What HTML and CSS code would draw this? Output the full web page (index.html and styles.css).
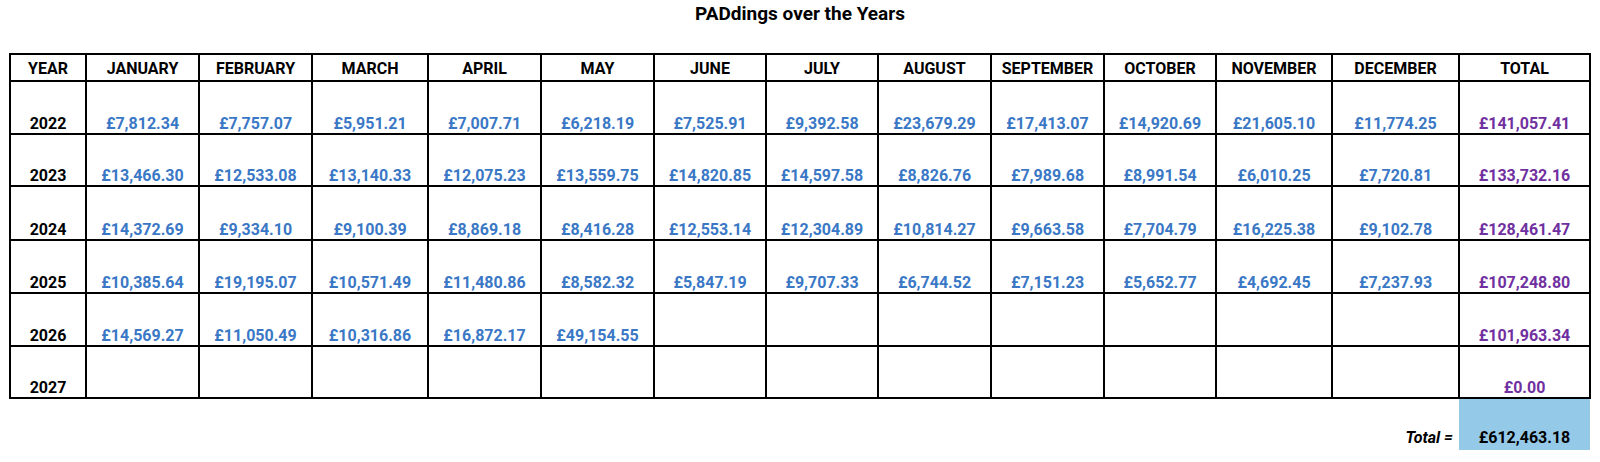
FILE: index.html
```html
<!DOCTYPE html>
<html lang="en">
<head>
<meta charset="utf-8">
<title>PADdings over the Years</title>
<link rel="stylesheet" href="styles.css">
</head>
<body>
<div class="page">
  <h1 class="title">PADdings over the Years</h1>
  <table class="grid">
    <colgroup>
      <col class="c-year">
      <col class="c-m"><col class="c-m"><col class="c-mw"><col class="c-m"><col class="c-m"><col class="c-mn">
      <col class="c-mn"><col class="c-m"><col class="c-m"><col class="c-mn"><col class="c-mw"><col class="c-dec"><col class="c-total">
    </colgroup>
    <thead>
      <tr class="head">
        <th>YEAR</th><th>JANUARY</th><th>FEBRUARY</th><th>MARCH</th><th>APRIL</th><th>MAY</th><th>JUNE</th><th>JULY</th><th>AUGUST</th><th>SEPTEMBER</th><th>OCTOBER</th><th>NOVEMBER</th><th>DECEMBER</th><th>TOTAL</th>
      </tr>
    </thead>
    <tbody>
      <tr class="r53">
        <td class="yr">2022</td><td>£7,812.34</td><td>£7,757.07</td><td>£5,951.21</td><td>£7,007.71</td><td>£6,218.19</td><td>£7,525.91</td><td>£9,392.58</td><td>£23,679.29</td><td>£17,413.07</td><td>£14,920.69</td><td>£21,605.10</td><td>£11,774.25</td><td class="tot">£141,057.41</td>
      </tr>
      <tr class="r52">
        <td class="yr">2023</td><td>£13,466.30</td><td>£12,533.08</td><td>£13,140.33</td><td>£12,075.23</td><td>£13,559.75</td><td>£14,820.85</td><td>£14,597.58</td><td>£8,826.76</td><td>£7,989.68</td><td>£8,991.54</td><td>£6,010.25</td><td>£7,720.81</td><td class="tot">£133,732.16</td>
      </tr>
      <tr class="r54">
        <td class="yr">2024</td><td>£14,372.69</td><td>£9,334.10</td><td>£9,100.39</td><td>£8,869.18</td><td>£8,416.28</td><td>£12,553.14</td><td>£12,304.89</td><td>£10,814.27</td><td>£9,663.58</td><td>£7,704.79</td><td>£16,225.38</td><td>£9,102.78</td><td class="tot">£128,461.47</td>
      </tr>
      <tr class="r53">
        <td class="yr">2025</td><td>£10,385.64</td><td>£19,195.07</td><td>£10,571.49</td><td>£11,480.86</td><td>£8,582.32</td><td>£5,847.19</td><td>£9,707.33</td><td>£6,744.52</td><td>£7,151.23</td><td>£5,652.77</td><td>£4,692.45</td><td>£7,237.93</td><td class="tot">£107,248.80</td>
      </tr>
      <tr class="r53">
        <td class="yr">2026</td><td>£14,569.27</td><td>£11,050.49</td><td>£10,316.86</td><td>£16,872.17</td><td>£49,154.55</td><td></td><td></td><td></td><td></td><td></td><td></td><td></td><td class="tot">£101,963.34</td>
      </tr>
      <tr class="r52">
        <td class="yr">2027</td><td></td><td></td><td></td><td></td><td></td><td></td><td></td><td></td><td></td><td></td><td></td><td></td><td class="tot">£0.00</td>
      </tr>
    </tbody>
  </table>
  <div class="grand">
    <span class="grand-label">Total =</span>
    <span class="grand-value">£612,463.18</span>
  </div>
</div>
</body>
</html>
```

FILE: styles.css
```css
html, body {
  margin: 0;
  padding: 0;
  background: #ffffff;
}

.page {
  padding: 5px 9px 0 9px;
  font-family: Roboto, "Noto Sans", "Liberation Sans", sans-serif;
  color: #000000;
}

.title {
  margin: 0 0 30px 0;
  font-size: 19px;
  line-height: 18px;
  font-weight: 700;
  text-align: center;
}

.grid {
  width: 1582px;
  table-layout: fixed;
  border-collapse: collapse;
  border: 2px solid #000;
  font-size: 16px;
  font-weight: 700;
}

.c-year { width: 76px; }
.c-m { width: 113px; }
.c-mn { width: 112px; }
.c-mw { width: 116px; }
.c-dec { width: 127px; }
.c-total { width: 131px; }

.grid th,
.grid td {
  border: 2px solid #000;
  padding: 0 0 1px 0;
  text-align: center;
  vertical-align: bottom;
  line-height: 16px;
  white-space: nowrap;
  color: #3a78c6;
}

.grid th {
  color: #000;
  padding-bottom: 3px;
}

.head { height: 27px; }
.r52 { height: 52px; }
.r53 { height: 53px; }
.r54 { height: 54px; }

.grid td.yr { color: #000; }
.grid td.tot { color: #7030a0; }

.grand {
  display: flex;
  justify-content: flex-end;
  align-items: flex-end;
  gap: 6px;
  width: 1582px;
  font-size: 16px;
  font-weight: 700;
  line-height: 16px;
}

.grand-label {
  font-style: italic;
  padding-bottom: 4px;
}

.grand-value {
  display: flex;
  align-items: flex-end;
  justify-content: center;
  box-sizing: border-box;
  width: 131px;
  height: 51px;
  margin-right: 1px;
  padding-bottom: 4px;
  background: #95c9e8;
}
```
